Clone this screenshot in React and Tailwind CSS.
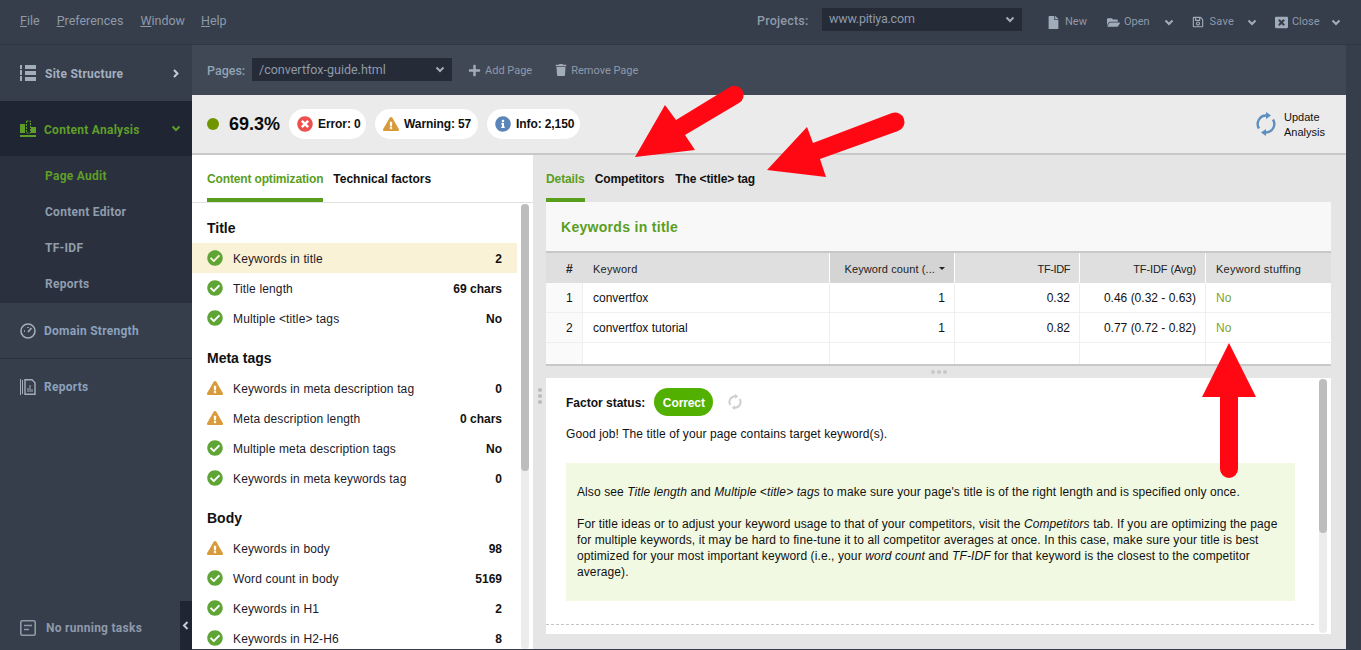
import {
  FaCheckCircle,
  FaExclamationTriangle,
  FaFile,
  FaFolderOpen,
  FaInfoCircle,
  FaPlus,
  FaRegSave,
  FaTimesCircle,
  FaTrash,
  FaWindowClose,
} from "react-icons/fa";

const arial = "font-['Liberation_Sans',Arial,sans-serif]";
const roboto = "font-['Roboto',sans-serif]";

function Chevron({ dir = "down", color = "#a3adba", className = "" }) {
  const d = {
    down: "M1.5 2.5 L5 6 L8.5 2.5",
    right: "M3 1 L6.5 4.5 L3 8",
    left: "M6.5 1 L3 4.5 L6.5 8",
  }[dir];
  return (
    <svg width="10" height="9" viewBox="0 0 10 9" className={className}>
      <path d={d} fill="none" stroke={color} strokeWidth="2" />
    </svg>
  );
}

function StatusIcon({ type }) {
  if (type === "warn") return <FaExclamationTriangle size={16} color="#d99a39" />;
  if (type === "error") return <FaTimesCircle size={16} color="#ee4f4f" />;
  if (type === "info") return <FaInfoCircle size={16} color="#5b85b8" />;
  return <FaCheckCircle size={16} color="#5fa536" />;
}

function Sync({ color, w, h, sw = 2.4 }) {
  return (
    <svg width={w} height={h} viewBox="0 0 20 24" fill="none">
      <path d="M3 16.5 A8.5 8.5 0 0 1 10 3.5" stroke={color} strokeWidth={sw} />
      <path d="M10 0 L15 3.5 L10 7 Z" fill={color} />
      <path d="M17 7.5 A8.5 8.5 0 0 1 10 20.5" stroke={color} strokeWidth={sw} />
      <path d="M10 17 L5 20.5 L10 24 Z" fill={color} />
    </svg>
  );
}

function TopMenu() {
  return (
    <div className={`flex h-[45px] shrink-0 items-center border-b border-[#2f3542] bg-[#363d4b] text-[#8f9aa9] ${roboto}`}>
      <div className="mb-[2px] flex w-[757px] shrink-0 pl-5 text-[12.5px]">
        <span><u>F</u>ile</span>
        <span className="ml-[17px]"><u>P</u>references</span>
        <span className="ml-[17px]"><u>W</u>indow</span>
        <span className="ml-[16px]"><u>H</u>elp</span>
      </div>
      <span className="mb-[2px] w-[65px] shrink-0 text-[12.5px] font-medium tracking-[0.2px]">Projects:</span>
      <div className="mb-[6px] flex h-[23px] w-[200px] shrink-0 items-center justify-between bg-[#252b37] px-[7px] text-[12.5px] tracking-[-0.2px]">
        <span>www.pitiya.com</span>
        <Chevron />
      </div>
      <div className="flex items-center text-[11px]">
        <FaFile size={13} color="#a0acba" className="ml-[25px]" />
        <span className="ml-[5px]">New</span>
        <FaFolderOpen size={13} color="#a0acba" className="ml-[20px]" />
        <span className="ml-[4px]">Open</span>
        <Chevron className="ml-[14px]" />
        <FaRegSave size={12} color="#a0acba" className="ml-[18px]" />
        <span className="ml-[6px] tracking-[0.2px]">Save</span>
        <Chevron className="ml-[13px]" />
        <FaWindowClose size={13} color="#a0acba" className="ml-[18px]" />
        <span className="ml-[4px]">Close</span>
        <Chevron className="ml-[11px]" />
      </div>
    </div>
  );
}

function Sidebar() {
  const sub = ["Page Audit", "Content Editor", "TF-IDF", "Reports"];
  return (
    <div className={`relative flex w-[192px] shrink-0 flex-col bg-[#363d4b] text-[12px] font-bold tracking-[0.27px] ${roboto}`}>
      <div className="flex h-[56px] items-center pl-5 text-[#a3b0c0]">
        <svg width="16" height="16" viewBox="0 0 16 16" fill="#a3adba">
          <path d="M0 0h2v4H0zM0 5h2v5H0zM0 11h2v5H0zM5 0h11v4H5zM5 6h11v4H5zM5 12h11v4H5z" />
        </svg>
        <span className="ml-[9px] pt-[2px]">Site Structure</span>
        <Chevron dir="right" color="#c4ccd6" className="ml-auto mr-[11px]" />
      </div>
      <div className="flex h-[55px] items-center bg-[#1f2532] pl-5 text-[#5f9e2a]">
        <svg width="16" height="17" viewBox="0 0 16 17" fill="#5f9e2a">
          <path d="M0 4h5v9H0zM11 7h5v6h-5zM0 15h16v2H0z" />
          <path d="M6.5 1h4v12h-4z" fill="none" stroke="#5f9e2a" strokeDasharray="2 1" />
        </svg>
        <span className="ml-2 pt-[2px]">Content Analysis</span>
        <Chevron color="#5f9e2a" className="ml-auto mr-[11px]" />
      </div>
      <div className="flex h-[147px] flex-col bg-[#2a303d] pt-px text-[#8f9dad]">
        {sub.map((s, i) => (
          <div key={s} className={`flex h-9 items-center pl-[45px] pt-[2px] ${i === 0 ? "text-[#5f9e2a]" : ""}`}>
            {s}
          </div>
        ))}
      </div>
      <div className="flex h-[56px] items-center border-b border-[#2b313d] pl-5 text-[#8ba2bd]">
        <svg width="16" height="16" viewBox="0 0 16 16" fill="none" stroke="#a3adba" strokeWidth="1.6">
          <circle cx="8" cy="8" r="7" />
          <path d="M8 9 L11.5 5" strokeWidth="1.8" />
          <path d="M4 8h1M8 4v1" />
        </svg>
        <span className="ml-2">Domain Strength</span>
      </div>
      <div className="flex h-[56px] items-center pl-5 text-[#8ba2bd]">
        <svg width="16" height="16" viewBox="0 0 16 16" fill="none" stroke="#a3adba">
          <path d="M.5 0v16M2.5 1v14" />
          <path d="M5 .8h7l3 3v11.4H5z" strokeWidth="1.4" />
          <path d="M8 13V9M10 13V6M12 13v-3" />
        </svg>
        <span className="ml-2">Reports</span>
      </div>
      <div className="mb-[14px] mt-auto flex h-4 items-center pl-5 text-[#8e9aaa]">
        <svg width="16" height="16" viewBox="0 0 16 16" fill="none" stroke="#8e99a8" strokeWidth="1.6">
          <rect x=".8" y=".8" width="14.4" height="14.4" rx="1.5" />
          <path d="M4 5.5h8M4 9.5h5" />
        </svg>
        <span className="ml-[10px]">No running tasks</span>
      </div>
      <div className="absolute bottom-0 right-0 flex h-[49px] w-3 items-center justify-center bg-[#1f2532]">
        <Chevron dir="left" color="#c4ccd6" />
      </div>
    </div>
  );
}

function PagesBar() {
  return (
    <div className={`flex h-[50px] shrink-0 items-center bg-[#404755] pb-px pl-[15px] text-[#8f9aa9] ${roboto}`}>
      <span className="w-[45px] pt-[3px] text-[12.5px] font-medium text-[#8fa3b5]">Pages:</span>
      <div className="flex h-[23px] w-[200px] items-center justify-between bg-[#252b37] px-[7px] text-[12.5px]">
        <span className="pt-[2px]">/convertfox-guide.html</span>
        <Chevron />
      </div>
      <FaPlus size={13} color="#a3adba" className="ml-4 mt-[1px]" />
      <span className="ml-[4px] pt-[3px] text-[11px]">Add Page</span>
      <FaTrash size={12} color="#a3adba" className="ml-[23px] mt-[1px]" />
      <span className="ml-[4px] pt-[3px] text-[11px]">Remove Page</span>
    </div>
  );
}

function Pill({ type, text, w }) {
  return (
    <div className={`flex h-[30px] items-center gap-[5px] rounded-[15px] bg-white pl-2 text-[12px] font-bold tracking-[-0.1px] text-[#111] ${w}`}>
      <StatusIcon type={type} />
      <span>{text}</span>
    </div>
  );
}

function StatusBar() {
  return (
    <div className={`flex h-[60px] shrink-0 items-center border-b-2 border-[#c8c8c8] bg-[#ebebeb] pl-[15px] ${arial}`}>
      <div className="h-3 w-3 rounded-full bg-[#6f9600]" />
      <span className="ml-[10px] text-[18px] font-bold text-[#0a0a0a]">69.3%</span>
      <div className="ml-[9px] flex gap-[9px]">
        <Pill type="error" text="Error: 0" w="w-[77px]" />
        <Pill type="warn" text="Warning: 57" w="w-[103px]" />
        <Pill type="info" text="Info: 2,150" w="w-[93px]" />
      </div>
      <div className="ml-auto mr-[21px] flex items-center gap-[8px]">
        <Sync color="#5b8fbd" w={20} h={24} />
        <div className="pt-px text-[11px] leading-[15px] text-[#111]">
          Update
          <br />
          Analysis
        </div>
      </div>
    </div>
  );
}

const groups = [
  {
    name: "Title",
    rows: [
      ["ok", "Keywords in title", "2", true],
      ["ok", "Title length", "69 chars"],
      ["ok", "Multiple <title> tags", "No"],
    ],
  },
  {
    name: "Meta tags",
    rows: [
      ["warn", "Keywords in meta description tag", "0"],
      ["warn", "Meta description length", "0 chars"],
      ["ok", "Multiple meta description tags", "No"],
      ["ok", "Keywords in meta keywords tag", "0"],
    ],
  },
  {
    name: "Body",
    rows: [
      ["warn", "Keywords in body", "98"],
      ["ok", "Word count in body", "5169"],
      ["ok", "Keywords in H1", "2"],
      ["ok", "Keywords in H2-H6", "8"],
    ],
  },
];

function LeftPanel() {
  return (
    <div className={`flex w-[341px] shrink-0 flex-col bg-white text-[12px] text-[#1a1a2a] ${arial}`}>
      <div className="flex h-[48px] shrink-0 border-b border-[#e2e2e2] pl-[15px]">
        <div className="flex h-[47px] items-center border-b-4 border-[#5a9e1e] pt-1 font-bold tracking-[-0.15px] text-[#5a9e1e]">
          Content optimization
        </div>
        <div className="ml-[10px] flex h-[47px] items-center font-bold text-[#111]">Technical factors</div>
      </div>
      <div className="flex min-h-0 flex-1">
        <div className="w-[325px] shrink-0 overflow-hidden">
          {groups.map((g) => (
            <div key={g.name}>
              <div className="mt-[10px] flex h-[30px] items-center pl-[15px] text-[14px] font-bold text-[#111]">
                {g.name}
              </div>
              {g.rows.map(([type, label, value, active]) => (
                <div
                  key={label}
                  className={`flex h-[30px] items-center px-[15px] ${active ? "bg-[#faf2d7]" : ""}`}
                >
                  <StatusIcon type={type} />
                  <span className="ml-[10px] pt-[2px] tracking-[0.14px]">{label}</span>
                  <span className="ml-auto pt-[2px] font-bold text-[#111]">{value}</span>
                </div>
              ))}
            </div>
          ))}
        </div>
        <div className="ml-1 mt-px w-2 rounded bg-[#ececec]">
          <div className="h-[267px] rounded bg-[#bdbdbd]" />
        </div>
      </div>
    </div>
  );
}

const cols = [
  ["w-[36px] pl-5", "#", "text-[12px] font-bold"],
  ["w-[247px] pl-[10px]", "Keyword", "tracking-[0.25px]"],
  ["w-[125px] justify-end pr-[9px]", "Keyword count", "tracking-[0.1px]"],
  ["w-[125px] justify-end pr-[9px]", "TF-IDF", "tracking-[-0.4px]"],
  ["w-[126px] justify-end pr-[9px]", "TF-IDF (Avg)", "tracking-[-0.1px]"],
  ["flex-1 pl-[10px]", "Keyword stuffing", "tracking-[0.25px]"],
];

const tableRows = [
  ["1", "convertfox", "1", "0.32", "0.46 (0.32 - 0.63)", "No"],
  ["2", "convertfox tutorial", "1", "0.82", "0.77 (0.72 - 0.82)", "No"],
  ["", "", "", "", "", ""],
];

function KeywordTable() {
  return (
    <div className="border-t-2 border-[#c8c8c8]">
      <div className="flex h-[30px] bg-[#dfdfdf] text-[11px] text-[#222]">
        {cols.map(([cls, label, head], i) => (
          <div
            key={label}
            className={`flex items-center pt-[2px] ${cls} ${head} ${i === 1 ? "border-l border-transparent" : ""} ${i > 1 ? "border-l border-white" : ""} ${i === 2 ? "bg-[#d4d4d4]" : ""}`}
          >
            {i === 2 ? (
              <>
                <span>Keyword count (...</span>
                <span className="mb-px ml-[4px] border-x-[3px] border-t-[3px] border-x-transparent border-t-[#222]" />
              </>
            ) : (
              label
            )}
          </div>
        ))}
      </div>
      {tableRows.map((row, r) => (
        <div key={r} className={`flex bg-white text-[12px] text-[#111] ${r === 2 ? "h-[21px]" : "h-[30px] border-b border-[#efefef]"}`}>
          {row.map((val, i) => (
            <div
              key={i}
              className={`flex items-center ${cols[i][0]} ${i > 0 ? "border-l border-[#efefef]" : "bg-[#fafafa]"} ${i === 5 ? "text-[#7da32f]" : ""}`}
            >
              {val}
            </div>
          ))}
        </div>
      ))}
      <div className="h-[2px] bg-[#c8c8c8]" />
    </div>
  );
}

function RightPanel() {
  return (
    <div className={`flex min-w-0 flex-1 bg-[#e5e5e5] text-[12px] ${arial}`}>
      <div className="flex w-[13px] shrink-0 flex-col items-center pt-[233px]">
        <div className="flex flex-col gap-[2px] pl-[1px]">
          <div className="h-1 w-1 rounded-full bg-[#bbb]" />
          <div className="h-1 w-1 rounded-full bg-[#bbb]" />
          <div className="h-1 w-1 rounded-full bg-[#bbb]" />
        </div>
      </div>
      <div className="flex w-[785px] shrink-0 flex-col">
        <div className="flex h-[47px] shrink-0 gap-[10px] font-bold tracking-[-0.1px] text-[#111]">
          <div className="flex h-[47px] items-center border-b-4 border-[#5a9e1e] pt-1 text-[#5a9e1e]">Details</div>
          <div className="flex h-[47px] items-center">Competitors</div>
          <div className="ml-px flex h-[47px] items-center">The &lt;title&gt; tag</div>
        </div>
        <div className="flex h-[49px] shrink-0 items-center bg-[#f8f8f8] pl-[15px] pt-[2px] text-[14px] font-bold tracking-[0.3px] text-[#5a9e1e]">
          Keywords in title
        </div>
        <KeywordTable />
        <div className="flex h-[12px] shrink-0 items-center justify-center gap-[2px] pl-[1px]">
          <div className="h-1 w-1 rounded-full bg-[#c8c8c8]" />
          <div className="h-1 w-1 rounded-full bg-[#c8c8c8]" />
          <div className="h-1 w-1 rounded-full bg-[#c8c8c8]" />
        </div>
        <div className="flex h-[256px] shrink-0 bg-white text-[#111]">
          <div className="w-[773px] shrink-0">
            <div className="flex h-[38px] items-center pl-5 pt-[10px]">
              <span className="pt-px font-bold">Factor status:</span>
              <span className="ml-[9px] flex h-7 w-[59px] items-center justify-center rounded-[14px] bg-[#52b000] pt-px font-bold tracking-[-0.1px] text-white">
                Correct
              </span>
              <span className="ml-[15px]">
                <Sync color="#cfcfcf" w={14} h={16} sw={3} />
              </span>
            </div>
            <div className="mt-[10px] pl-5 leading-4 tracking-[0.1px]">Good job! The title of your page contains target keyword(s).</div>
            <div className="ml-5 mt-[21px] h-[138px] w-[729px] bg-[#f1f9e2] pl-[11px] pr-[15px] pt-[21px] leading-4 tracking-[0.1px]">
              <p>
                Also see <i>Title length</i> and <i>Multiple &lt;title&gt; tags</i> to make sure your page's title is of
                the right length and is specified only once.
              </p>
              <p className="mt-4">
                For title ideas or to adjust your keyword usage to that of your competitors, visit the <i>Competitors</i>{" "}
                tab. If you are optimizing the page for multiple keywords, it may be hard to fine-tune it to all competitor
                averages at once. In this case, make sure your title is best optimized for your most important keyword (i.e.,
                your <i>word count</i> and <i>TF-IDF</i> for that keyword is the closest to the competitor average).
              </p>
            </div>
            <div className="mt-[23px] w-[768px] border-t border-dashed border-[#c4c4c4]" />
          </div>
          <div className="mt-px h-[254px] w-2 rounded bg-[#ececec]">
            <div className="h-[154px] rounded bg-[#bdbdbd]" />
          </div>
        </div>
      </div>
    </div>
  );
}

function Arrows() {
  return (
    <svg width="1361" height="650" viewBox="0 0 1361 650" className="pointer-events-none absolute left-0 top-0">
      <g fill="#ff0813" stroke="none">
        <path d="M635 157 L665 105 L676 120 L730 87 A9 9 0 0 1 739 103 L685 135 L695 150 Z" />
        <path d="M767 170 L807 127 L813 143 L892 113 A9 9 0 0 1 898 131 L820 159 L826 177 Z" />
        <path d="M1229 343 L1256 397 L1238 397 L1238 469 A9 9 0 0 1 1220 469 L1220 397 L1202 397 Z" />
      </g>
    </svg>
  );
}

export default function App() {
  return (
    <div className="relative flex h-[650px] w-[1361px] flex-col overflow-hidden bg-[#363d4b]">
      <TopMenu />
      <div className="flex min-h-0 flex-1">
        <Sidebar />
        <div className="flex w-[1154px] shrink-0 flex-col pb-px">
          <PagesBar />
          <StatusBar />
          <div className="flex min-h-0 flex-1">
            <LeftPanel />
            <RightPanel />
          </div>
        </div>
      </div>
      <Arrows />
    </div>
  );
}
